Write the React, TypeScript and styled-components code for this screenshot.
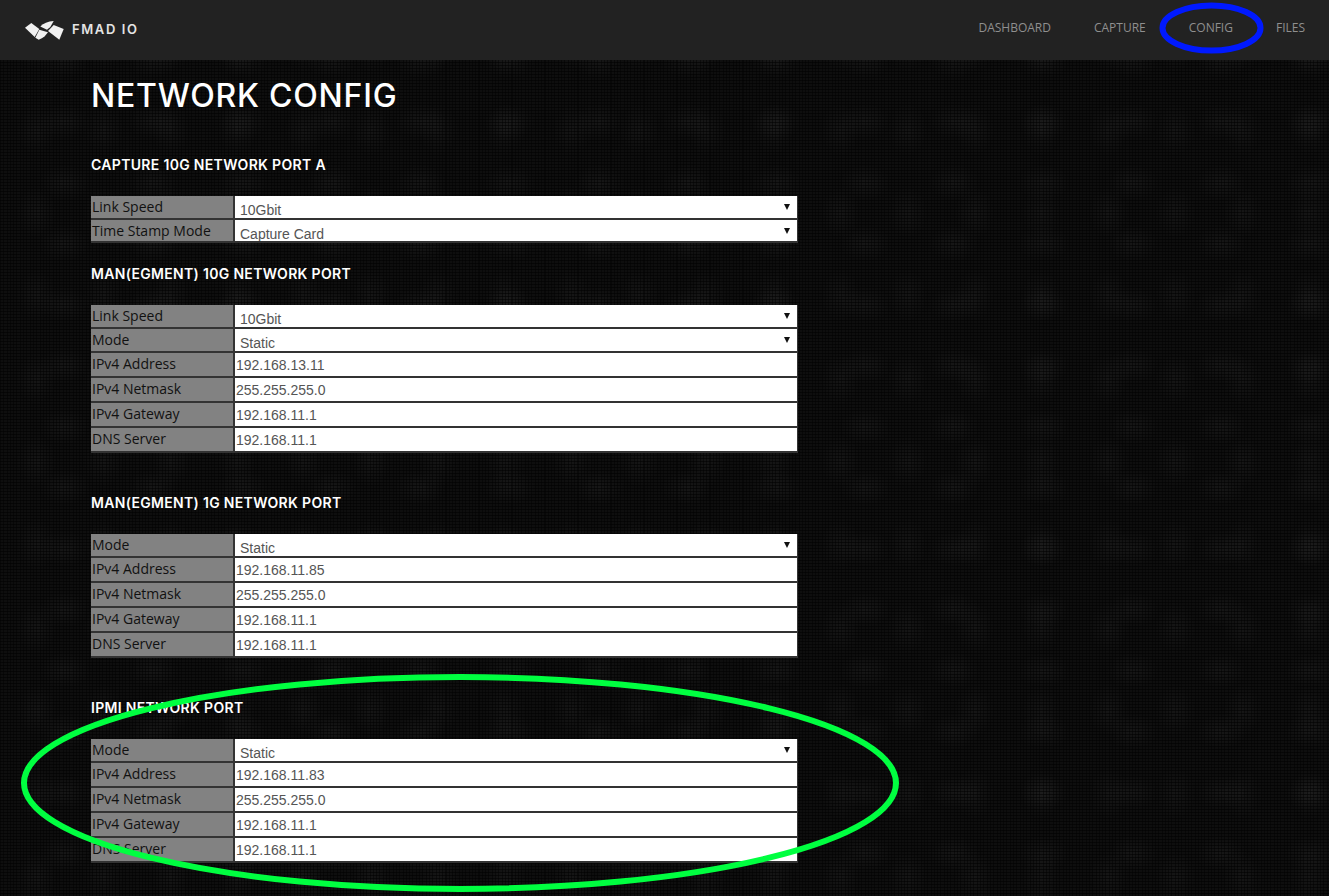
import React from "react";
import styled, { createGlobalStyle } from "styled-components";

const Global = createGlobalStyle`
  html, body { margin: 0; padding: 0; background: #060606; }
  body { font-family: "Open Sans", "Liberation Sans", sans-serif; }
`;

const Page = styled.div`
  position: relative;
  min-height: 896px;
  overflow: hidden;
  background-color: #0e0e0e;
  background-image:
    repeating-linear-gradient(0deg, rgba(0,0,0,0.55) 0 1px, transparent 1px 3px),
    repeating-linear-gradient(90deg, rgba(0,0,0,0.45) 0 1px, transparent 1px 3.3px),
    radial-gradient(ellipse 26px 18px at 50% 50%, rgba(255,255,255,0.035), transparent 100%),
    radial-gradient(ellipse 20px 26px at 50% 50%, rgba(255,255,255,0.03), transparent 100%);
  background-size: auto, auto, 89px 61px, 67px 83px;
  background-position: 0 0, 0 0, 20px 30px, 70px 5px;
`;

const Header = styled.header`
  height: 60px;
  background: #222222;
  display: flex;
  align-items: center;
  justify-content: space-between;
  padding: 0 24px 0 25px;
  box-sizing: border-box;
`;

const Brand = styled.div`
  display: flex;
  align-items: center;
  gap: 8px;
`;

const BrandName = styled.span`
  font-family: Inter, "Liberation Sans", sans-serif;
  font-size: 13px;
  line-height: 16px;
  font-weight: 600;
  letter-spacing: 1.6px;
  color: #e4e4e4;
  position: relative;
  top: -1px;
`;

const Nav = styled.nav`
  display: flex;
  gap: 43px;
  position: relative;
  top: -2px;
`;

const NavLink = styled.a`
  font-size: 12px;
  line-height: 16px;
  color: #8f8f8f;
  text-transform: uppercase;
`;

const Main = styled.main`
  padding: 0 0 34px 91px;
`;

const Title = styled.h1`
  margin: 0;
  padding-top: 16px;
  height: 95px;
  box-sizing: border-box;
  font-family: Inter, "Liberation Sans", sans-serif;
  font-size: 32px;
  line-height: 40px;
  font-weight: 500;
  letter-spacing: 0.76px;
  color: #ffffff;
  text-transform: uppercase;
`;

const Section = styled.section<{ $after: number }>`
  margin-bottom: ${(p) => p.$after}px;
`;

const SectionTitle = styled.h2`
  margin: 0 0 21px;
  font-family: Inter, "Liberation Sans", sans-serif;
  font-size: 14px;
  line-height: 20px;
  font-weight: 600;
  letter-spacing: 0.32px;
  color: #ffffff;
  text-transform: uppercase;
`;

const FormTable = styled.div`
  width: 706px;
  padding-right: 1px;
  background: #333333;
`;

const Row = styled.div<{ $height: number }>`
  display: grid;
  grid-template-columns: 142px 1fr;
  column-gap: 2px;
  height: ${(p) => p.$height}px;
  box-sizing: border-box;
  padding-bottom: 2px;
`;

const Label = styled.div`
  background: #828282;
  color: #111111;
  font-size: 14px;
  line-height: 21px;
  padding-left: 1px;
  white-space: nowrap;
  overflow: hidden;
`;

const Value = styled.div`
  position: relative;
  background: #ffffff;
  overflow: hidden;
`;

const TextField = styled.input`
  display: block;
  width: 100%;
  height: 100%;
  box-sizing: border-box;
  border: 0;
  outline: 0;
  margin: 0;
  padding: 0 0 0 1px;
  background: transparent;
  font-family: "Liberation Sans", Arial, sans-serif;
  font-size: 14px;
  color: #555555;
`;

const SelectText = styled.div`
  padding: 6px 0 0 5px;
  font-family: "Liberation Sans", Arial, sans-serif;
  font-size: 14px;
  line-height: 17px;
  color: #555555;
`;

const Arrow = styled.span`
  position: absolute;
  top: 8px;
  right: 7px;
  width: 0;
  height: 0;
  border-left: 3.5px solid transparent;
  border-right: 3.5px solid transparent;
  border-top: 6px solid #111111;
`;

const Overlay = styled.svg`
  position: absolute;
  left: 0;
  top: 0;
  pointer-events: none;
`;

type Field = { label: string; value: string; select?: boolean; height?: number };

const link: Field = { label: "Link Speed", value: "10Gbit", select: true };
const mode: Field = { label: "Mode", value: "Static", select: true };
const ip = (a: string, g = "192.168.11.1", m = "255.255.255.0"): Field[] => [
  { label: "IPv4 Address", value: a },
  { label: "IPv4 Netmask", value: m },
  { label: "IPv4 Gateway", value: g },
  { label: "DNS Server", value: g },
];

const sections: { title: string; after: number; fields: Field[] }[] = [
  {
    title: "Capture 10G Network Port A",
    after: 21,
    fields: [link, { label: "Time Stamp Mode", value: "Capture Card", select: true, height: 23 }],
  },
  { title: "MAN(EGMENT) 10G Network Port", after: 40, fields: [link, mode, ...ip("192.168.13.11")] },
  { title: "MAN(EGMENT) 1G Network Port", after: 40, fields: [mode, ...ip("192.168.11.85")] },
  { title: "IPMI Network Port", after: 0, fields: [mode, ...ip("192.168.11.83")] },
];

const Logo = () => (
  <svg width="39" height="19" viewBox="25 18 39 19" fill="#f0f0f0" aria-hidden="true">
    <path d="M25 24.7 31.3 20 39.3 26 34.7 34Z" />
    <path d="M40.3 23.6Q45 18.6 53.7 18L50.3 24 47 26.7Z" />
    <path d="M35.3 34.7 39.3 26.7 48 29.3 44.7 33.3Q42 35.8 38.7 36.7Z" />
    <path d="M48 28 53.7 22 63.7 26 59.3 36.7Z" />
  </svg>
);

export default function App() {
  return (
    <Page>
      <Global />
      <Header>
        <Brand>
          <Logo />
          <BrandName>FMAD IO</BrandName>
        </Brand>
        <Nav>
          <NavLink>Dashboard</NavLink>
          <NavLink>Capture</NavLink>
          <NavLink>Config</NavLink>
          <NavLink>Files</NavLink>
        </Nav>
      </Header>
      <Main>
        <Title>Network Config</Title>
        {sections.map((s) => (
          <Section key={s.title} $after={s.after}>
            <SectionTitle>{s.title}</SectionTitle>
            <FormTable>
              {s.fields.map((f) => (
                <Row key={f.label} $height={f.height ?? (f.select ? 24 : 25)}>
                  <Label>{f.label}</Label>
                  <Value>
                    {f.select ? (
                      <>
                        <SelectText>{f.value}</SelectText>
                        <Arrow />
                      </>
                    ) : (
                      <TextField readOnly value={f.value} />
                    )}
                  </Value>
                </Row>
              ))}
            </FormTable>
          </Section>
        ))}
      </Main>
      <Overlay width="1329" height="896" viewBox="0 0 1329 896" fill="none" aria-hidden="true">
        <ellipse cx="1211.5" cy="28" rx="49" ry="22.5" stroke="#0019ff" strokeWidth="6" />
        <ellipse cx="460" cy="783" rx="436" ry="106" stroke="#00ff40" strokeWidth="6" />
      </Overlay>
    </Page>
  );
}
